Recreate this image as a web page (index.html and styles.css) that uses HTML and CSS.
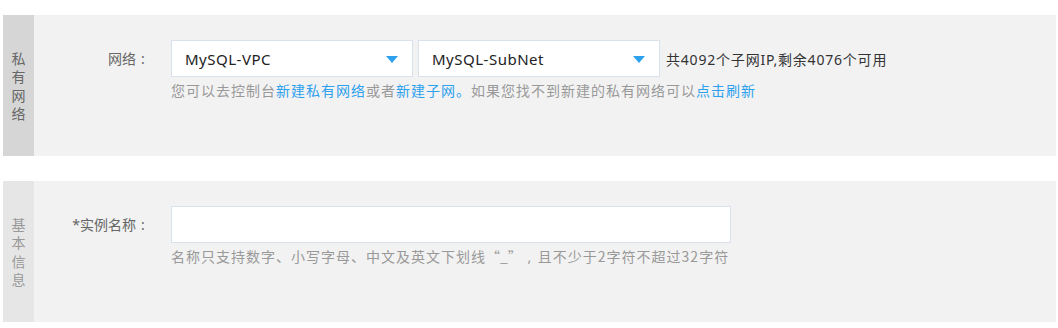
FILE: index.html
```html
<!DOCTYPE html>
<html lang="zh-CN">
<head>
<meta charset="utf-8">
<title>MySQL</title>
<link rel="stylesheet" href="styles.css">
</head>
<body>
<div class="page">
  <section class="panel">
    <div class="side side-dark"><span class="side-text">私有网络</span></div>
    <div class="body">
      <div class="row">
        <label class="label">网络<span class="colon">:</span></label>
        <div class="field">
          <div class="controls">
            <div class="select"><span class="select-value">MySQL-VPC</span><span class="arrow"></span></div>
            <div class="select"><span class="select-value">MySQL-SubNet</span><span class="arrow"></span></div>
            <span class="info">共4092个子网IP,剩余4076个可用</span>
          </div>
          <p class="hint">您可以去控制台<a class="link">新建私有网络</a>或者<a class="link">新建子网。</a>如果您找不到新建的私有网络可以<a class="link">点击刷新</a></p>
        </div>
      </div>
    </div>
  </section>
  <section class="panel">
    <div class="side side-light"><span class="side-text">基本信息</span></div>
    <div class="body">
      <div class="row">
        <label class="label">*实例名称<span class="colon">:</span></label>
        <div class="field">
          <div class="controls">
            <input class="text-input" type="text">
          </div>
          <p class="hint">名称只支持数字、小写字母、中文及英文下划线<span class="punct">“_”</span><span class="comma">,</span>且不少于2字符不超过32字符</p>
        </div>
      </div>
    </div>
  </section>
</div>
</body>
</html>
```
FILE: styles.css
```css
* { box-sizing: border-box; }
html, body { margin: 0; padding: 0; background: #fff; }
body {
  font-family: "Noto Sans", "Noto Sans CJK SC", sans-serif;
  font-size: 14px;
  color: #333;
}
.page {
  padding: 15px 2px 0 3px;
  display: flex;
  flex-direction: column;
  gap: 25px;
}
.panel {
  display: flex;
  height: 141px;
  background: #f2f2f2;
}
.side {
  width: 31px;
  flex: none;
  display: flex;
  align-items: center;
  justify-content: center;
}
.side-dark { background: #d6d6d6; color: #666; }
.side-light { background: #e6e6e6; color: #999; }
.side-text {
  width: 14px;
  font-family: "Noto Sans CJK SC", sans-serif;
  font-size: 14px;
  line-height: 18.5px;
  text-align: center;
}
.body { flex: 1; padding-top: 25px; }
.row { display: flex; align-items: flex-start; }
.label {
  width: 116px;
  margin-right: 21px;
  text-align: right;
  line-height: 37px;
  color: #666;
  font-family: "Noto Sans", "Noto Sans CJK SC", sans-serif;
}
.colon {
  display: inline-block;
  width: 14px;
  text-align: center;
}
.controls { display: flex; align-items: center; height: 37px; }
.select {
  width: 242px;
  height: 37px;
  background: #fff;
  border: 1px solid #d9e2ec;
  display: flex;
  align-items: center;
  justify-content: space-between;
  padding: 0 14px 0 13px;
  margin-right: 5px;
}
.select-value { font-size: 15px; letter-spacing: 0.5px; color: #222; }
.arrow {
  width: 0;
  height: 0;
  border-left: 6px solid transparent;
  border-right: 6px solid transparent;
  border-top: 7px solid #2ea1ee;
  margin-top: 2px;
}
.info {
  margin-left: 1px;
  color: #333;
  font-size: 14px;
  letter-spacing: 0.8px;
  font-family: "Noto Sans", "Noto Sans CJK SC", sans-serif;
}
.text-input {
  width: 560px;
  height: 37px;
  border: 1px solid #d9e2ec;
  background: #fff;
  outline: none;
  margin: 0;
}
.hint {
  margin: 3px 0 0;
  line-height: 20px;
  font-size: 14px;
  letter-spacing: 1px;
  color: #999;
  font-family: "Noto Sans CJK SC", sans-serif;
}
.punct { letter-spacing: 0; }
.comma {
  display: inline-block;
  width: 16px;
  text-align: center;
  font-family: "Noto Sans", sans-serif;
}
.link { color: #2ea1ee; text-decoration: none; }
```
